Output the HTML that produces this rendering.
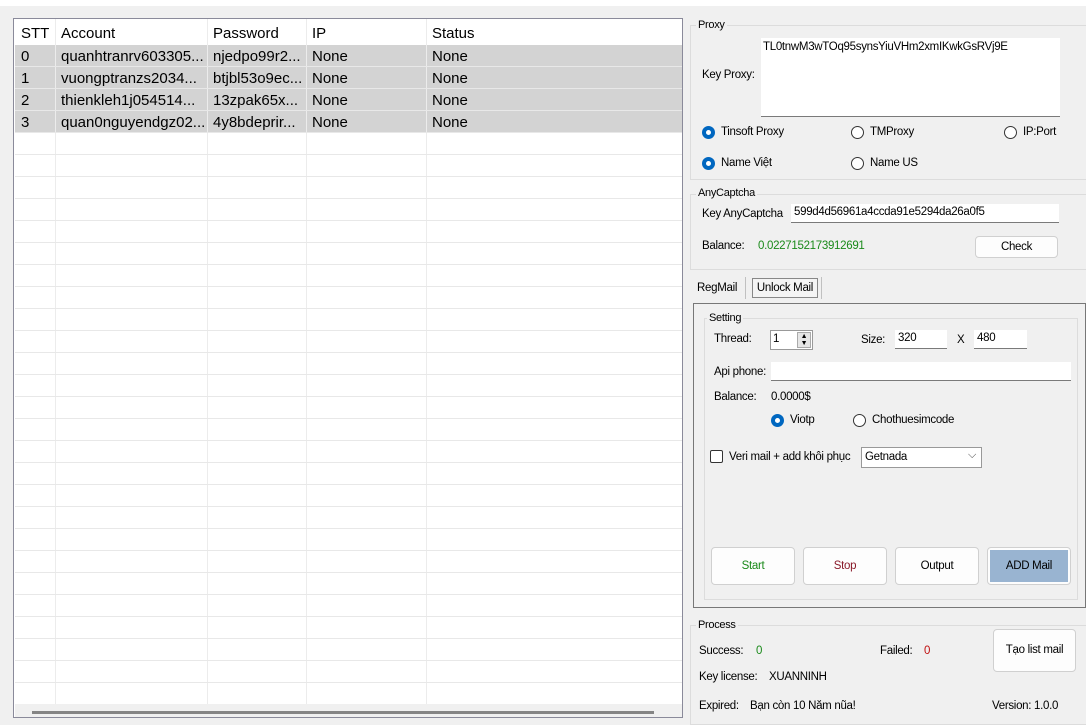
<!DOCTYPE html>
<html><head><meta charset="utf-8"><style>
*{box-sizing:border-box;margin:0;padding:0}
body{width:1086px;height:715px;background:#f0f0f0;position:relative;overflow:hidden;font-family:"Liberation Sans",sans-serif;font-size:11.5px;letter-spacing:-0.3px;color:#000}
.a{position:absolute;white-space:nowrap}
.grid{position:absolute;left:13px;top:18px;width:670px;height:700px;border:1px solid #8a8a9a;background:#fff;overflow:hidden;letter-spacing:0}
.t{font-size:15px}
.gb{position:absolute;border:1px solid #dcdcdc}
.gt{position:absolute;background:#f0f0f0;padding:0 2px;font-size:11px}
.in{position:absolute;background:#fff;border-bottom:1px solid #7a7a7a;padding:2px 3px}
.btn{position:absolute;background:#fdfdfd;border:1px solid #d0d0d0;border-radius:4px;text-align:center}
.r{position:absolute;width:13px;height:13px;border-radius:50%;border:1px solid #333;background:#fff}
.r.on{border:4px solid #0067c0;background:#fff}
</style></head><body>
<div class="a" style="left:0;top:0;width:1086px;height:6px;background:#fff"></div>
<div class="grid">
<svg width="670" height="700" style="position:absolute;left:0;top:0">
<rect x="1" y="26" width="668" height="88" fill="#d3d3d3"/>
<g stroke="#ececec" stroke-width="1">
<line x1="41.5" y1="0" x2="41.5" y2="685"/><line x1="193.5" y1="0" x2="193.5" y2="685"/><line x1="292.5" y1="0" x2="292.5" y2="685"/><line x1="412.5" y1="0" x2="412.5" y2="685"/>
</g>
<g stroke="#e8e8e8">
<line x1="1" y1="47.5" x2="668" y2="47.5"/><line x1="1" y1="69.5" x2="668" y2="69.5"/><line x1="1" y1="91.5" x2="668" y2="91.5"/><line x1="1" y1="113.5" x2="668" y2="113.5"/>
<line x1="1" y1="135.5" x2="668" y2="135.5"/><line x1="1" y1="157.5" x2="668" y2="157.5"/><line x1="1" y1="179.5" x2="668" y2="179.5"/><line x1="1" y1="201.5" x2="668" y2="201.5"/><line x1="1" y1="223.5" x2="668" y2="223.5"/><line x1="1" y1="245.5" x2="668" y2="245.5"/><line x1="1" y1="267.5" x2="668" y2="267.5"/><line x1="1" y1="289.5" x2="668" y2="289.5"/><line x1="1" y1="311.5" x2="668" y2="311.5"/><line x1="1" y1="333.5" x2="668" y2="333.5"/><line x1="1" y1="355.5" x2="668" y2="355.5"/><line x1="1" y1="377.5" x2="668" y2="377.5"/><line x1="1" y1="399.5" x2="668" y2="399.5"/><line x1="1" y1="421.5" x2="668" y2="421.5"/><line x1="1" y1="443.5" x2="668" y2="443.5"/><line x1="1" y1="465.5" x2="668" y2="465.5"/><line x1="1" y1="487.5" x2="668" y2="487.5"/><line x1="1" y1="509.5" x2="668" y2="509.5"/><line x1="1" y1="531.5" x2="668" y2="531.5"/><line x1="1" y1="553.5" x2="668" y2="553.5"/><line x1="1" y1="575.5" x2="668" y2="575.5"/><line x1="1" y1="597.5" x2="668" y2="597.5"/><line x1="1" y1="619.5" x2="668" y2="619.5"/><line x1="1" y1="641.5" x2="668" y2="641.5"/><line x1="1" y1="663.5" x2="668" y2="663.5"/>
</g>
<rect x="1" y="685" width="668" height="15" fill="#f0f0f0"/>
<rect x="18" y="692" width="622" height="3" fill="#858585"/>
</svg>
<div class="a t" style="left:7px;top:6px">STT</div><div class="a t" style="left:47px;top:6px">Account</div><div class="a t" style="left:199px;top:6px">Password</div><div class="a t" style="left:298px;top:6px">IP</div><div class="a t" style="left:418px;top:6px">Status</div>
<div class="a t" style="left:7px;top:29px">0</div><div class="a t" style="left:47px;top:29px">quanhtranrv603305...</div><div class="a t" style="left:199px;top:29px">njedpo99r2...</div><div class="a t" style="left:298px;top:29px">None</div><div class="a t" style="left:418px;top:29px">None</div>
<div class="a t" style="left:7px;top:51px">1</div><div class="a t" style="left:47px;top:51px">vuongptranzs2034...</div><div class="a t" style="left:199px;top:51px">btjbl53o9ec...</div><div class="a t" style="left:298px;top:51px">None</div><div class="a t" style="left:418px;top:51px">None</div>
<div class="a t" style="left:7px;top:73px">2</div><div class="a t" style="left:47px;top:73px">thienkleh1j054514...</div><div class="a t" style="left:199px;top:73px">13zpak65x...</div><div class="a t" style="left:298px;top:73px">None</div><div class="a t" style="left:418px;top:73px">None</div>
<div class="a t" style="left:7px;top:95px">3</div><div class="a t" style="left:47px;top:95px">quan0nguyendgz02...</div><div class="a t" style="left:199px;top:95px">4y8bdeprir...</div><div class="a t" style="left:298px;top:95px">None</div><div class="a t" style="left:418px;top:95px">None</div>
</div>

<!-- Proxy -->
<div class="gb" style="left:690px;top:25px;width:400px;height:155px"></div>
<div class="gt" style="left:696px;top:19px">Proxy</div>
<div class="a" style="left:761px;top:38px;width:299px;height:79px;background:#fff;border-bottom:1px solid #7a7a7a"></div>
<div class="a" style="left:763px;top:41px">TL0tnwM3wTOq95synsYiuVHm2xmIKwkGsRVj9E</div>
<div class="a" style="left:702px;top:69px">Key Proxy:</div>
<div class="r on" style="left:702px;top:126px"></div><div class="a" style="left:721px;top:126px">Tinsoft Proxy</div>
<div class="r" style="left:851px;top:126px"></div><div class="a" style="left:870px;top:126px">TMProxy</div>
<div class="r" style="left:1004px;top:126px"></div><div class="a" style="left:1023px;top:126px">IP:Port</div>
<div class="r on" style="left:702px;top:157px"></div><div class="a" style="left:721px;top:157px">Name Việt</div>
<div class="r" style="left:851px;top:157px"></div><div class="a" style="left:870px;top:157px">Name US</div>

<!-- AnyCaptcha -->
<div class="gb" style="left:690px;top:194px;width:400px;height:76px"></div>
<div class="gt" style="left:696px;top:187px">AnyCaptcha</div>
<div class="a" style="left:702px;top:208px">Key AnyCaptcha</div>
<div class="in" style="left:791px;top:204px;width:268px;height:19px">599d4d56961a4ccda91e5294da26a0f5</div>
<div class="a" style="left:702px;top:240px">Balance:</div>
<div class="a" style="left:758px;top:240px;color:#1a8a1a">0.0227152173912691</div>
<div class="btn" style="left:975px;top:236px;width:83px;height:22px;line-height:20px">Check</div>

<!-- tabs -->
<div class="a" style="left:697px;top:282px">RegMail</div>
<div class="a" style="left:745px;top:277px;width:1px;height:22px;background:#c0c0c0"></div>
<div class="a" style="left:752px;top:278px;width:66px;height:20px;border:1px solid #888;background:#f4f4f4;text-align:center;line-height:18px">Unlock Mail</div>
<div class="a" style="left:821px;top:277px;width:1px;height:22px;background:#c0c0c0"></div>
<div class="a" style="left:693px;top:303px;width:393px;height:305px;border:1px solid #777"></div>

<!-- Setting -->
<div class="gb" style="left:704px;top:318px;width:374px;height:282px"></div>
<div class="gt" style="left:707px;top:312px">Setting</div>
<div class="a" style="left:714px;top:333px">Thread:</div>
<div class="a" style="left:770px;top:330px;width:43px;height:20px;background:#fff;border:1px solid #999"></div>
<div class="a" style="left:773px;top:333px">1</div>
<div class="a" style="left:797px;top:332px;width:14px;height:16px;background:#e6e6e6;border:1px solid #aaa;font-size:7px;line-height:7px;text-align:center">▲<br>▼</div>
<div class="a" style="left:861px;top:334px">Size:</div>
<div class="in" style="left:895px;top:330px;width:52px;height:19px">320</div>
<div class="a" style="left:957px;top:334px">X</div>
<div class="in" style="left:974px;top:330px;width:53px;height:19px">480</div>
<div class="a" style="left:714px;top:366px">Api phone:</div>
<div class="in" style="left:771px;top:362px;width:300px;height:19px"></div>
<div class="a" style="left:714px;top:391px">Balance:</div>
<div class="a" style="left:771px;top:391px">0.0000$</div>
<div class="r on" style="left:771px;top:414px"></div><div class="a" style="left:790px;top:414px">Viotp</div>
<div class="r" style="left:853px;top:414px"></div><div class="a" style="left:872px;top:414px">Chothuesimcode</div>
<div class="a" style="left:710px;top:450px;width:13px;height:13px;border:1px solid #333;border-radius:2px;background:#fff"></div>
<div class="a" style="left:729px;top:451px">Veri mail + add khôi phục</div>
<div class="a" style="left:861px;top:447px;width:121px;height:21px;background:#fff;border:1px solid #999;padding:3px 3px">Getnada<span style="position:absolute;right:5px;top:1px;font-size:11px;color:#444">⌵</span></div>
<div class="btn" style="left:711px;top:547px;width:84px;height:38px;line-height:36px;color:#1a8a1a">Start</div>
<div class="btn" style="left:803px;top:547px;width:84px;height:38px;line-height:36px;color:#8a1a2a">Stop</div>
<div class="btn" style="left:895px;top:547px;width:84px;height:38px;line-height:36px">Output</div>
<div class="btn" style="left:987px;top:547px;width:84px;height:38px;padding:2px"><div style="background:#99b4d1;height:32px;line-height:32px">ADD Mail</div></div>

<!-- Process -->
<div class="gb" style="left:690px;top:625px;width:400px;height:100px"></div>
<div class="gt" style="left:696px;top:619px">Process</div>
<div class="a" style="left:699px;top:645px">Success:</div><div class="a" style="left:756px;top:645px;color:#1a8a1a">0</div>
<div class="a" style="left:880px;top:645px">Failed:</div><div class="a" style="left:924px;top:645px;color:#c01010">0</div>
<div class="btn" style="left:993px;top:629px;width:83px;height:43px;line-height:41px">Tạo list mail</div>
<div class="a" style="left:699px;top:671px">Key license:</div><div class="a" style="left:769px;top:671px">XUANNINH</div>
<div class="a" style="left:699px;top:700px">Expired:</div><div class="a" style="left:750px;top:700px">Bạn còn 10 Năm nũa!</div>
<div class="a" style="left:992px;top:700px">Version: 1.0.0</div>
</body></html>
